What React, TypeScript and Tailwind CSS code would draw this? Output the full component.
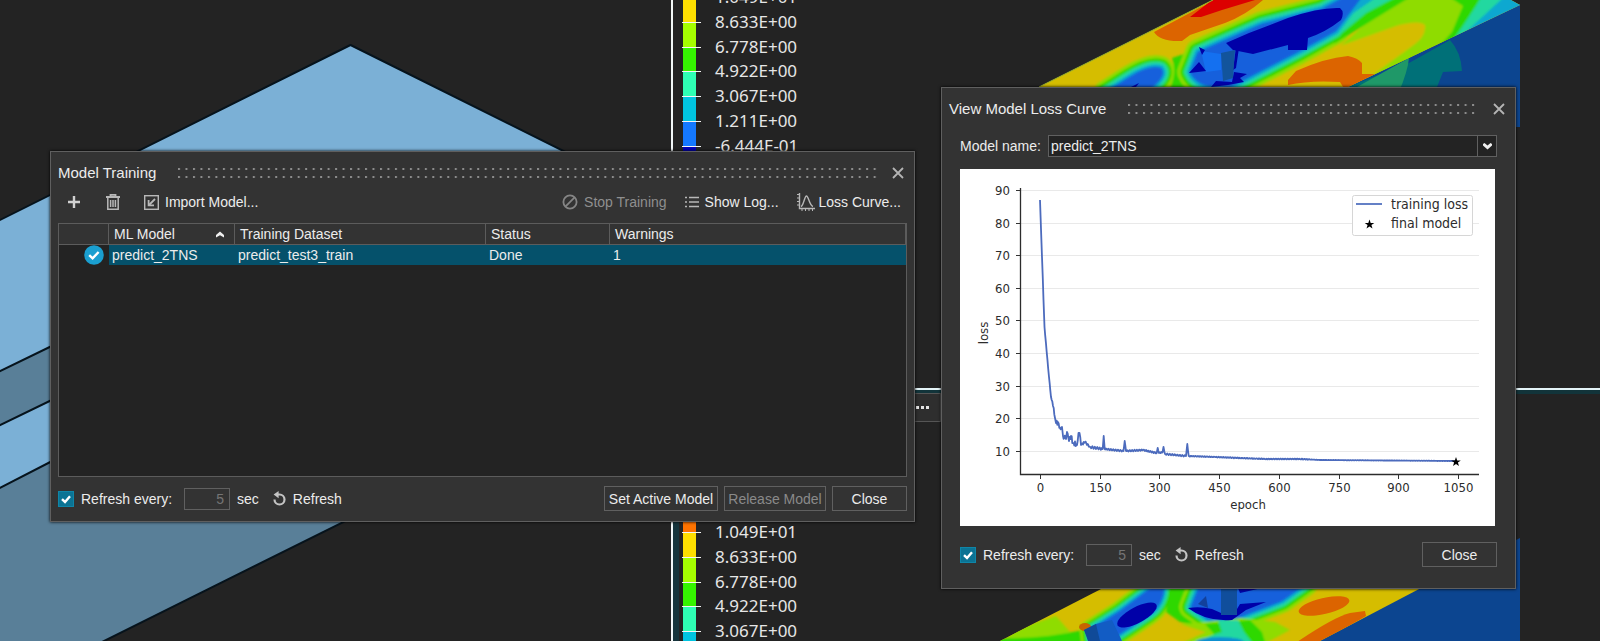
import React, { useId } from "react";

const LEGEND = [
  { label: "1.049E+01", below: "#ffdf00" },
  { label: "8.633E+00", below: "#a5ff00" },
  { label: "6.778E+00", below: "#35f500" },
  { label: "4.922E+00", below: "#2effb4" },
  { label: "3.067E+00", below: "#00c4e0" },
  { label: "1.211E+00", below: "#1478ff" },
  { label: "-6.444E-01", below: "#0000b8" },
];

function ColorScale({ top }: { top: number }) {
  return (
    <g>
      <rect x="683" y={top - 25} width="13" height="25" fill="#ff7300" />
      {LEGEND.map((entry, i) => {
        const y = top + Math.round(i * 24.75);
        return (
          <g key={entry.label}>
            <rect x="683" y={y} width="13" height="25" fill={entry.below} />
            <rect x="682" y={y} width="19" height="1" fill="#f4f4f4" />
            <text x="715" y={y + 6} fontSize="17" fill="#e6e6e6">
              {entry.label}
            </text>
          </g>
        );
      })}
    </g>
  );
}

const HALO = [
  { color: "#8fdc00", width: 34 },
  { color: "#2fd800", width: 25 },
  { color: "#20d8a0", width: 16 },
  { color: "#08a8d0", width: 8 },
  { color: "#1260dc", width: 1 },
];

function Valley({ d, scale = 1 }: { d: string; scale?: number }) {
  return (
    <g>
      {HALO.map((h) => (
        <path key={h.color} d={d} fill={h.color} stroke={h.color} strokeWidth={h.width * scale} strokeLinejoin="round" />
      ))}
    </g>
  );
}

function Viewports() {
  return (
    <svg
      className="absolute inset-0 h-full w-full font-['Noto_Sans',sans-serif]"
      viewBox="0 0 1600 641"
      preserveAspectRatio="xMidYMid slice"
      aria-hidden="true"
    >
      <defs>
        <clipPath id="face-top">
          <path d="M1039 87 L1213 0 H1511 L1520 5 L1348 87Z" />
        </clipPath>
        <clipPath id="face-bottom">
          <path d="M1103 588 L1000 641 H1320 L1421 588Z" />
        </clipPath>
        <filter id="soft">
          <feGaussianBlur stdDeviation="1" />
        </filter>
      </defs>
      <rect width="1600" height="641" fill="#232323" />

      <g stroke="#06131c" strokeWidth="2" strokeLinejoin="round">
        <path d="M-4 222 L350.5 45 L720 229 L350 400 L-4 520Z" fill="#7bb0d6" />
        <path d="M-4 373 L60 342 V396 L-4 427Z" fill="#597f98" />
        <path d="M-4 490 L60 457 L440 474 L100 643 H-4Z" fill="#597f98" />
      </g>

      <rect x="673" y="391" width="6" height="250" fill="#16343c" />
      <rect x="673" y="390" width="927" height="4" fill="#12343a" />
      <rect x="671" y="0" width="2" height="641" fill="#f2f7f8" />
      <rect x="671" y="388" width="929" height="2" fill="#e4f4f8" />

      <g>
        <path d="M1520 4 V127 H1400 L1340 86Z" fill="#0c4590" />
        <path d="M1348 87 L1409 63 L1450 40 Q1461 52 1462 71 L1443 72 L1437 87Z" fill="#007078" />
        <path d="M1348 92 L1409 58 Q1408 70 1399 92Z" fill="#1f9868" />
        <g clipPath="url(#face-top)">
          <rect x="1030" y="0" width="500" height="90" fill="#d5bd00" />
          <g filter="url(#soft)">
            <path d="M1336 50 L1399 -6 H1530 V20 L1435 50 L1380 90 Z" fill="#8fdc00" />
            <path d="M1448 -4 H1530 V14 L1420 68 L1452 32 L1463 6Z" fill="#2fd800" />
            <path d="M1482 -4 H1530 V14 L1452 42 Q1470 16 1482 -4Z" fill="#20d8a0" />
            <path d="M1505 -4 H1530 V12 L1466 32Z" fill="#08a8d0" />
            <path d="M1265 92 L1340 46 L1399 25 Q1420 20 1425 25 Q1426 36 1415 44 L1374 74 L1340 92Z" fill="#d5bd00" />
            <Valley d="M1106 92 L1128 78 Q1150 64 1161 68 Q1166 73 1158 82 L1148 92Z" scale={0.7} />
            <path d="M1172 58 L1196 50 V92 H1168 Q1178 74 1172 58Z" fill="#2fd800" />
            <Valley d="M1190 72 L1198 52 Q1230 38 1262 24 L1322 9 L1350 -6 H1364 L1336 31 L1296 53 L1257 73 L1230 87 Q1198 90 1190 72Z" scale={0.75} />
            <path d="M1412 -4 L1376 18 L1334 44 L1352 18 L1374 -4Z" fill="#2fd800" />
            <path d="M1398 -4 L1366 13 L1338 36 L1352 16 L1372 -4Z" fill="#20d8a0" />
            <path d="M1378 -4 L1352 14 L1338 32 L1364 -4Z" fill="#08a8d0" />
          </g>
          <path d="M1154 32 L1201 7 L1217 0 H1263 Q1246 15 1225 23 L1190 35 L1182 41 Q1160 42 1154 32Z" fill="#dc6400" />
          <path d="M1190 17 L1212 0 H1255 L1222 10 L1201 17Z" fill="#dc0000" />
          <path d="M1226 43 L1249 33 L1288 18 Q1320 7 1340 8 Q1345 12 1341 20 Q1326 32 1308 38 L1307 50 H1288 V45 L1253 54 L1233 50Z" fill="#0000a8" />
          <path d="M1288 80 L1296 71 Q1325 58 1348 56 Q1358 58 1362 63 V74 L1376 74 L1345 90 L1340 82 Q1310 80 1288 85Z" fill="#dc6400" />
          <path d="M1201 51 L1221 54 V70 L1206 72Z" fill="#1470f0" />
          <path d="M1189 73 L1199 62 L1206 71 L1198 72Z M1199 47 L1205 50 L1202 55Z M1236 47 L1239 48 L1236 68 L1233 70Z M1211 87 L1216 81 L1232 82 L1234 72 L1247 74 L1240 78 L1244 82 L1228 85Z M1131 87 L1139 83 L1136 87Z" fill="#0000a8" />
          <path d="M1221 53 L1235 50 L1233 78 L1223 81Z" fill="#12549c" />
        </g>
        <path d="M1039 87 L1213 0" stroke="#9db52c" strokeWidth="1" fill="none" />
      </g>

      <g>
        <path d="M1520 538 V641 H1310 L1420 588Z" fill="#0c4590" />
        <g clipPath="url(#face-bottom)">
          <rect x="990" y="580" width="440" height="61" fill="#d5bd00" />
          <g filter="url(#soft)">
            <path d="M1020 628 L1056 616 L1070 632 L1110 641 L990 650Z" fill="#8fdc00" />
            <path d="M990 638 Q1040 640 1083 630 V650 H990Z" fill="#2fd800" />
            <Valley d="M1092 648 L1090 630 L1120 611 L1153 586 H1164 Q1164 604 1150 614 L1117 636 L1112 648Z" scale={0.6} />
            <path d="M1170 584 H1192 L1190 612 L1220 630 L1180 622 L1166 612Z" fill="#2fd800" />
            <Valley d="M1200 584 L1191 607 L1208 619 L1232 620 L1282 601 L1306 584Z" scale={0.7} />
            <path d="M1180 624 L1206 622 L1240 618 L1275 622 L1290 630 L1262 645 H1178 L1206 632Z" fill="#8fdc00" />
            <path d="M1205 624 L1250 620 L1262 632 L1266 645 H1190 L1214 634Z" fill="#2fd800" />
            <path d="M1218 620 H1238 L1244 632 L1254 645 H1186 L1222 632Z" fill="#20d8a0" />
            <ellipse cx="1220" cy="642" rx="24" ry="5" fill="#0890d0" />
          </g>
          <ellipse cx="1085" cy="627" rx="6" ry="4" fill="#c86400" />
          <path d="M1084 630 L1096 624 L1112 620 L1122 641 H1090Z" fill="#125cc4" />
          <path d="M1084 630 L1096 624 L1100 641 H1088Z" fill="#104a98" />
          <ellipse cx="1137" cy="615" rx="22" ry="8" transform="rotate(-28 1137 615)" fill="#0000a8" />
          <path d="M1188 608 Q1200 606 1212 609 L1221 613 L1237 609 L1240 604 L1266 602 L1246 610 L1232 620 Q1206 622 1188 608Z M1238 588 H1262 L1240 593Z" fill="#0000a8" />
          <path d="M1198 604 L1206 596 L1208 608Z" fill="#12409c" />
          <rect x="1221" y="588" width="16" height="27" fill="#104e9c" />
          <ellipse cx="1324" cy="606" rx="26" ry="8" transform="rotate(-13 1324 606)" fill="#dc6400" />
          <path d="M1365 611 L1350 613 Q1334 617 1297 642 H1322 L1366 616Z" fill="#dc6400" />
        </g>
      </g>

      <ColorScale top={-3} />
      <ColorScale top={532} />
    </svg>
  );
}

function Grip() {
  const id = useId();
  return (
    <svg className="h-[10px] min-w-0 flex-1" aria-hidden="true">
      <defs>
        <pattern id={id} width="7.48" height="10" patternUnits="userSpaceOnUse">
          <rect x="0" y="0" width="2" height="2" fill="#8c8c8c" />
          <rect x="0" y="8" width="2" height="2" fill="#8c8c8c" />
        </pattern>
      </defs>
      <rect width="100%" height="10" fill={`url(#${id})`} />
    </svg>
  );
}

function TitleBar({ title }: { title: string }) {
  return (
    <header className="flex items-center pr-[10px] pl-[7px]">
      <h2 className="mr-[22px] text-[15px] leading-5">{title}</h2>
      <Grip />
      <button type="button" aria-label="Close window" className="ml-[14px]">
        <svg width="12" height="12" viewBox="0 0 12 12" stroke="#b4b4b4" strokeWidth="1.8">
          <path d="M1 1 L11 11 M11 1 L1 11" />
        </svg>
      </button>
    </header>
  );
}

function PushButton({ children, className, disabled }: { children: React.ReactNode; className: string; disabled?: boolean }) {
  return (
    <button
      type="button"
      disabled={disabled}
      className={`flex h-[25px] items-center justify-center border border-[#606060] leading-4 disabled:text-[#8a8a8a] ${className}`}
    >
      {children}
    </button>
  );
}

function RefreshControls() {
  const id = useId();
  return (
    <div className="flex items-center">
      <span className="grid size-4">
        <input
          id={`${id}-on`}
          type="checkbox"
          defaultChecked
          className="size-4 appearance-none border border-[#0f86a8] bg-[#0b7394] [grid-area:1/1]"
        />
        <svg viewBox="0 0 16 16" className="pointer-events-none size-4 [grid-area:1/1]" fill="none" stroke="#fff" strokeWidth="2.4">
          <path d="M4 8.2 L7 11 L12 5.2" />
        </svg>
      </span>
      <label htmlFor={`${id}-on`} className="ml-[7px]">
        Refresh every:
      </label>
      <input
        type="text"
        aria-label="Refresh interval in seconds"
        defaultValue="5"
        disabled
        className="ml-[12px] h-[22px] w-[46px] border border-[#606060] bg-transparent pr-[5px] text-right text-[#757575]"
      />
      <span className="ml-[7px]">sec</span>
      <button type="button" className="ml-[14px] flex items-center gap-[7px]">
        <svg width="13" height="15" viewBox="0 0 13 15" fill="none">
          <path d="M4.5 3.5 H6.5 A5 5 0 1 1 1.5 8.5" stroke="#c4c4c4" strokeWidth="2.2" />
          <path d="M0.6 3.6 L5.6 0 V7.2Z" fill="#c4c4c4" />
        </svg>
        Refresh
      </button>
    </div>
  );
}

function ModelTraining() {
  const th = "h-[21px] border-r border-b border-[#5c5c5c] pl-[5px] text-left font-normal";
  const td = "h-5 bg-[#05516b] pl-[3px]";
  return (
    <section
      aria-label="Model Training"
      className="absolute top-[151px] left-[50px] w-[865px] border border-[#5f5f5f] bg-[#333333] pt-[11px] pb-[10px] shadow-[0_0_3px_#000]"
    >
      <TitleBar title="Model Training" />
      <div className="mt-[10px] flex items-center justify-between pr-[13px] pl-[17px]">
        <div className="flex items-center">
          <button type="button" aria-label="Add model">
            <svg width="12" height="12" viewBox="0 0 12 12" stroke="#d0d0d0" strokeWidth="2.4">
              <path d="M6 0 V12 M0 6 H12" />
            </svg>
          </button>
          <button type="button" aria-label="Delete model" className="ml-[26px]">
            <svg width="14" height="16" viewBox="0 0 14 16" fill="none" stroke="#b8b8b8" strokeWidth="1.5">
              <path d="M0 3 H14 M4.5 3 V0.8 H9.5 V3" strokeWidth="1.8" />
              <path d="M1.8 4 V15.2 H12.2 V4 M4.6 6 V13 M7 6 V13 M9.4 6 V13" />
            </svg>
          </button>
          <button type="button" className="ml-[24px] flex items-center gap-[6px]">
            <svg width="15" height="15" viewBox="0 0 15 15" fill="none" stroke="#b8b8b8">
              <rect x="0.7" y="0.7" width="13.6" height="13.6" strokeWidth="1.4" />
              <path d="M11 4 L5 10" strokeWidth="1.8" />
              <path d="M4.6 5 V10.4 H10" strokeWidth="1.8" />
            </svg>
            Import Model...
          </button>
        </div>
        <div className="flex items-center gap-[18px]">
          <button type="button" disabled className="flex items-center gap-[6px] text-[#8f8f8f]">
            <svg width="16" height="16" viewBox="0 0 16 16" fill="none" stroke="#858585" strokeWidth="1.8">
              <circle cx="8" cy="8" r="6.6" />
              <path d="M3.6 12.4 L12.4 3.6" />
            </svg>
            Stop Training
          </button>
          <button type="button" className="flex items-center gap-[6px]">
            <svg width="14" height="12" viewBox="0 0 14 12" stroke="#b8b8b8" strokeWidth="1.6">
              <path d="M0 1.5 H2 M0 6 H2 M0 10.5 H2 M4 1.5 H14 M4 6 H14 M4 10.5 H14" />
            </svg>
            Show Log...
          </button>
          <button type="button" className="flex items-center gap-1">
            <svg width="18" height="18" viewBox="0 0 18 18" fill="none" stroke="#b8b8b8" strokeWidth="1.4">
              <path d="M2.5 0 V15.5 H18" />
              <path d="M0 1.5 H2 M0 5 H2 M0 8.5 H2 M0 12 H2 M5 16 V18 M8.5 16 V18 M12 16 V18 M15.5 16 V18" strokeWidth="1" />
              <path d="M4 13.5 C6.5 13 7.5 3 9.5 3 C11.5 3 12.5 13 16 13.5" />
            </svg>
            Loss Curve...
          </button>
        </div>
      </div>
      <div className="mx-[7px] mt-[12px] h-[254px] border border-[#5c5c5c] bg-[#232323]">
        <table className="w-full table-fixed border-separate border-spacing-0">
          <colgroup>
            <col className="w-[50px]" />
            <col className="w-[126px]" />
            <col className="w-[251px]" />
            <col className="w-[124px]" />
            <col />
          </colgroup>
          <thead className="bg-[#333333]">
            <tr>
              <th className={th} aria-label="State" />
              <th className={th}>
                <span className="flex items-center justify-between pr-[10px]">
                  ML Model
                  <svg width="8" height="7" viewBox="0 0 8 7" fill="#f0f0f0">
                    <path d="M4 0.4 L8 4 V6.6 L4 4.2 L0 6.6 V4Z" />
                  </svg>
                </span>
              </th>
              <th className={th}>Training Dataset</th>
              <th className={th}>Status</th>
              <th className={th}>Warnings</th>
            </tr>
          </thead>
          <tbody>
            <tr>
              <td className="h-5 pl-[25px]">
                <svg width="20" height="20" viewBox="0 0 20 20">
                  <circle cx="10" cy="10" r="9.8" fill="#1a9fd0" />
                  <path d="M5.2 10.2 L8.6 13.4 L14.6 7" fill="none" stroke="#fff" strokeWidth="2.4" />
                </svg>
              </td>
              <td className={td}>predict_2TNS</td>
              <td className={td}>predict_test3_train</td>
              <td className={td}>Done</td>
              <td className={td}>1</td>
            </tr>
          </tbody>
        </table>
      </div>
      <footer className="mt-[9px] flex items-center justify-between px-[7px]">
        <RefreshControls />
        <div className="flex gap-[6px]">
          <PushButton className="w-[114px]">Set Active Model</PushButton>
          <PushButton className="w-[102px]" disabled>
            Release Model
          </PushButton>
          <PushButton className="w-[75px]">Close</PushButton>
        </div>
      </footer>
    </section>
  );
}

const CURVE: [number, number][] = [
  [80, 31], [81, 60], [82, 88], [83.5, 131], [84.5, 158], [86.7, 183], [89, 208], [91, 228], [93, 237], [95, 249],
  [96, 254], [98, 253], [100, 259], [102, 258], [103, 267], [106, 270], [107, 263], [109, 272], [111, 267], [113, 274],
  [117, 276], [118.5, 264], [119.5, 264], [121, 276], [125, 273], [130, 278], [142.7, 280], [143.7, 267],
  [144.7, 280], [163.5, 282], [164.7, 272], [166, 282], [183, 281], [196.7, 284], [197.7, 279], [199, 284],
  [202.6, 283], [203.5, 278], [205, 285], [226, 287], [227.3, 275], [228.7, 287], [255, 288], [280, 289],
  [306, 290], [340, 290], [360, 291], [430, 291.5], [495, 292],
];

function curvePath() {
  const points: string[] = [];
  for (let i = 0; i < CURVE.length - 1; i++) {
    const [x0, y0] = CURVE[i];
    const [x1, y1] = CURVE[i + 1];
    const steps = Math.max(1, Math.floor((x1 - x0) / 0.6));
    for (let s = 0; s < steps; s++) {
      const x = x0 + ((x1 - x0) * s) / steps;
      const amp = x < 92 || s === 0 ? 0 : x < 122 ? 2.5 : x < 145 ? 1.1 : x < 230 ? 0.7 : x < 350 ? 0.4 : 0.1;
      const y = y0 + ((y1 - y0) * s) / steps + Math.sin(x * 12.9898) * amp;
      points.push(`${x.toFixed(1)} ${y.toFixed(1)}`);
    }
  }
  points.push("495 292");
  return `M${points.join("L")}`;
}

const STAR = "M0 -5 L1.2 -1.6 H4.8 L1.9 0.6 L3 4 L0 1.9 L-3 4 L-1.9 0.6 L-4.8 -1.6 H-1.2Z";

function LossChart() {
  return (
    <svg
      viewBox="0 0 535 357"
      role="img"
      aria-label="Training loss by epoch"
      className="block h-auto w-full bg-white font-['DejaVu_Sans_Condensed','DejaVu_Sans',sans-serif]"
      fontSize="13"
      fill="#2c2c2c"
    >
      {[90, 80, 70, 60, 50, 40, 30, 20, 10].map((v, i) => {
        const y = Math.round(22 + i * 32.6) - 0.5;
        return (
          <g key={v}>
            <path d={`M61 ${y} H519`} stroke="#e9e9e9" />
            <path d={`M56 ${y} H60`} stroke="#333" />
            <text x="50" y={y + 4.5} textAnchor="end">
              {v}
            </text>
          </g>
        );
      })}
      {[0, 150, 300, 450, 600, 750, 900, 1050].map((v, i) => {
        const x = Math.round(80 + i * 59.7) + 0.5;
        return (
          <g key={v}>
            <path d={`M${x} 306 V310`} stroke="#333" />
            <text x={x} y="323" textAnchor="middle">
              {v}
            </text>
          </g>
        );
      })}
      <path d="M60.5 19 V305.5 H519" fill="none" stroke="#2c2c2c" strokeWidth="1.3" />
      <text x="288" y="340" textAnchor="middle">
        epoch
      </text>
      <text transform="translate(28 164) rotate(-90)" textAnchor="middle">
        loss
      </text>
      <path d={curvePath()} fill="none" stroke="#4c6bbd" strokeWidth="1.8" strokeLinejoin="round" />
      <path d={STAR} transform="translate(496 293)" fill="#000" />
      <rect x="392.5" y="26.5" width="120" height="40" rx="2" fill="#fff" stroke="#d6d6d6" />
      <path d="M396 35 H422" stroke="#6480c6" strokeWidth="2" />
      <path d={STAR} transform="translate(409.5 55.5)" fill="#000" />
      <g fontSize="14">
        <text x="431" y="40">training loss</text>
        <text x="431" y="59">final model</text>
      </g>
    </svg>
  );
}

function LossCurve() {
  return (
    <section
      aria-label="View Model Loss Curve"
      className="absolute top-[87px] left-[941px] w-[575px] border border-[#5f5f5f] bg-[#333333] pt-[11px] pb-[21px] shadow-[0_0_3px_#000]"
    >
      <TitleBar title="View Model Loss Curve" />
      <div className="mt-[16px] flex items-center px-[18px]">
        <label htmlFor="model-name">Model name:</label>
        <div className="ml-[7px] grid min-w-0 flex-1">
          <select
            id="model-name"
            className="h-[22px] w-full appearance-none border border-[#606060] bg-[#232323] pl-[2px] [grid-area:1/1]"
          >
            <option>predict_2TNS</option>
          </select>
          <span className="pointer-events-none my-px mr-px flex w-[19px] items-center justify-center justify-self-end border-l border-[#606060] [grid-area:1/1]">
            <svg width="9" height="7" viewBox="0 0 9 7" fill="#f0f0f0">
              <path d="M0 1 L1.5 0 L4.5 2.6 L7.5 0 L9 1 V2.5 L4.5 6.6 L0 2.5Z" />
            </svg>
          </span>
        </div>
      </div>
      <div className="mt-[12px] pr-[20px] pl-[18px]">
        <LossChart />
      </div>
      <footer className="mt-[16px] flex items-center justify-between px-[18px]">
        <RefreshControls />
        <PushButton className="w-[75px]">Close</PushButton>
      </footer>
    </section>
  );
}

export default function App() {
  return (
    <main className="relative h-screen min-h-[641px] overflow-hidden bg-[#232323] font-['Liberation_Sans',Arial,sans-serif] text-[14px] leading-[18px] text-[#ececec]">
      <Viewports />
      <button
        type="button"
        aria-label="More view options"
        className="absolute top-[393px] left-[900px] flex h-[29px] w-[41px] items-center justify-end border border-[#555555] bg-[#2e2e2e] pr-[11px]"
      >
        <svg width="13" height="3" viewBox="0 0 13 3" fill="#e4e4e4">
          <path d="M0 0 H3 V3 H0Z M5 0 H8 V3 H5Z M10 0 H13 V3 H10Z" />
        </svg>
      </button>
      <ModelTraining />
      <LossCurve />
    </main>
  );
}
